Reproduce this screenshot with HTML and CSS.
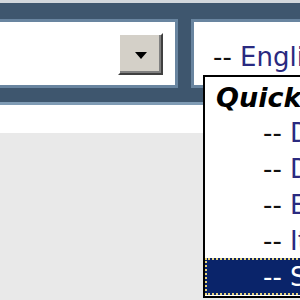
FILE: index.html
```html
<!DOCTYPE html>
<html>
<head>
<meta charset="utf-8">
<link rel="stylesheet" href="styles.css">
</head>
<body>
<div class="page">
  <div class="strip"></div>
  <div class="header">
    <div class="panel panel-left">
      <div class="btn"><span class="arrow"></span></div>
    </div>
    <div class="panel panel-right">
      <span class="dash">-- </span><span class="name">English</span>
    </div>
  </div>
  <div class="whiteband"></div>
  <div class="gray"></div>
  <div class="list">
    <div class="row group">Quick</div>
    <div class="row item"><span class="dash">-- </span><span class="name">Deutsch</span></div>
    <div class="row item"><span class="dash">-- </span><span class="name">Dansk</span></div>
    <div class="row item"><span class="dash">-- </span><span class="name">Español</span></div>
    <div class="row item"><span class="dash">-- </span><span class="name">Italiano</span></div>
    <div class="row item selected"><span class="dash">-- </span><span class="name">Svenska</span></div>
  </div>
</div>
</body>
</html>
```

FILE: styles.css
```css
html, body {
  margin: 0;
  padding: 0;
}
.page {
  position: relative;
  width: 300px;
  height: 300px;
  overflow: hidden;
  background: #e9e9e9;
  font-family: "DejaVu Sans", Verdana, sans-serif;
  display: flex;
  flex-direction: column;
}
.strip {
  height: 3px;
  background: #d2d7dc;
  flex: none;
}
.header {
  flex: none;
  background: #3e566e;
  display: flex;
  gap: 13px;
  padding: 16px 0 14px 0;
  margin-right: -20px;
}
.panel {
  background: #fff;
  border: 3px solid #6985a0;
  height: 63px;
  box-sizing: content-box;
}
.panel-left {
  width: 175px;
  margin-left: -3px;
  display: flex;
  justify-content: flex-end;
  align-items: flex-start;
  padding: 0;
}
.btn {
  width: 41px;
  height: 38px;
  margin: 11px 12px 0 0;
  background: #d4d0c8;
  border: 2px solid;
  border-color: #ffffff #404040 #404040 #ffffff;
  box-shadow: inset -2px -2px 0 #808080;
  display: flex;
  align-items: center;
  justify-content: center;
}
.arrow {
  width: 0;
  height: 0;
  border-left: 6px solid transparent;
  border-right: 6px solid transparent;
  border-top: 7px solid #000;
  margin: 2px 0 0 0;
}
.panel-right {
  flex: 1;
  padding: 20px 0 0 19px;
  height: 43px;
  font-size: 26px;
  white-space: nowrap;
  overflow: hidden;
}
.dash {
  color: #111;
}
.name {
  color: #2a2a80;
}
.whiteband {
  flex: none;
  height: 28px;
  background: #fff;
  border-top: 3px solid #7f9bb4;
}
.gray {
  flex: 1;
  background: #e9e9e9;
}
.list {
  position: absolute;
  left: 203px;
  top: 75px;
  width: 140px;
  height: 218px;
  background: #fff;
  border: 2px solid #000;
  padding-top: 1px;
}
.row {
  height: 36px;
  box-sizing: border-box;
  padding-top: 3px;
  line-height: 33px;
  font-size: 26px;
  white-space: nowrap;
}
.group {
  font-weight: bold;
  font-style: italic;
  font-size: 27px;
  color: #000;
  padding-left: 11px;
}
.item {
  padding-left: 58px;
}
.selected {
  height: 37px;
  background: #0a246a;
  border: 2px dotted #e8d47c;
  padding-left: 56px;
  padding-top: 1px;
  line-height: 33px;
}
.selected .dash,
.selected .name {
  color: #fff;
}
```
